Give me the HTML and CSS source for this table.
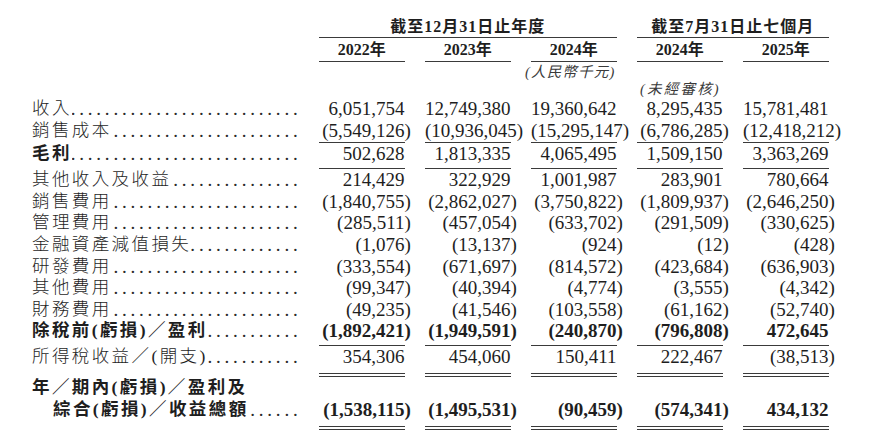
FILE: index.html
```html
<!DOCTYPE html>
<html lang="zh-Hant">
<head>
<meta charset="utf-8">
<title>損益表</title>
<link rel="stylesheet" href="styles.css">
</head>
<body>
<div class="sheet">
  <div class="row head1">
    <div class="grp g1">截至12月31日止年度</div>
    <div class="grp g2">截至7月31日止七個月</div>
  </div>
  <div class="row head2">
    <div class="yr c2">2022年</div>
    <div class="yr">2023年</div>
    <div class="yr">2024年</div>
    <div class="yr">2024年</div>
    <div class="yr">2025年</div>
  </div>
  <div class="row head3">
    <div class="note n1">(人民幣千元)</div>
  </div>
  <div class="row head4">
    <div class="note n2">(未經審核)</div>
  </div>

  <div class="row data first">
    <div class="lab"><span class="t">收入</span><span class="dots">.................................................</span></div>
    <div class="num">6,051,754</div>
    <div class="num">12,749,380</div>
    <div class="num">19,360,642</div>
    <div class="num">8,295,435</div>
    <div class="num">15,781,481</div>
  </div>
  <div class="row data u1 tight">
    <div class="lab"><span class="t">銷售成本</span><span class="dots">.................................................</span></div>
    <div class="num">(5,549,126<span class="rp">)</span></div>
    <div class="num">(10,936,045<span class="rp">)</span></div>
    <div class="num">(15,295,147<span class="rp">)</span></div>
    <div class="num">(6,786,285<span class="rp">)</span></div>
    <div class="num">(12,418,212<span class="rp">)</span></div>
  </div>
  <div class="row data u1 loose">
    <div class="lab"><span class="t b">毛利</span><span class="dots">.................................................</span></div>
    <div class="num">502,628</div>
    <div class="num">1,813,335</div>
    <div class="num">4,065,495</div>
    <div class="num">1,509,150</div>
    <div class="num">3,363,269</div>
  </div>
  <div class="row data">
    <div class="lab"><span class="t">其他收入及收益</span><span class="dots">.................................................</span></div>
    <div class="num">214,429</div>
    <div class="num">322,929</div>
    <div class="num">1,001,987</div>
    <div class="num">283,901</div>
    <div class="num">780,664</div>
  </div>
  <div class="row data">
    <div class="lab"><span class="t">銷售費用</span><span class="dots">.................................................</span></div>
    <div class="num">(1,840,755<span class="rp">)</span></div>
    <div class="num">(2,862,027<span class="rp">)</span></div>
    <div class="num">(3,750,822<span class="rp">)</span></div>
    <div class="num">(1,809,937<span class="rp">)</span></div>
    <div class="num">(2,646,250<span class="rp">)</span></div>
  </div>
  <div class="row data">
    <div class="lab"><span class="t">管理費用</span><span class="dots">.................................................</span></div>
    <div class="num">(285,511<span class="rp">)</span></div>
    <div class="num">(457,054<span class="rp">)</span></div>
    <div class="num">(633,702<span class="rp">)</span></div>
    <div class="num">(291,509<span class="rp">)</span></div>
    <div class="num">(330,625<span class="rp">)</span></div>
  </div>
  <div class="row data">
    <div class="lab"><span class="t">金融資產減值損失</span><span class="dots">.................................................</span></div>
    <div class="num">(1,076<span class="rp">)</span></div>
    <div class="num">(13,137<span class="rp">)</span></div>
    <div class="num">(924<span class="rp">)</span></div>
    <div class="num">(12<span class="rp">)</span></div>
    <div class="num">(428<span class="rp">)</span></div>
  </div>
  <div class="row data">
    <div class="lab"><span class="t">研發費用</span><span class="dots">.................................................</span></div>
    <div class="num">(333,554<span class="rp">)</span></div>
    <div class="num">(671,697<span class="rp">)</span></div>
    <div class="num">(814,572<span class="rp">)</span></div>
    <div class="num">(423,684<span class="rp">)</span></div>
    <div class="num">(636,903<span class="rp">)</span></div>
  </div>
  <div class="row data">
    <div class="lab"><span class="t">其他費用</span><span class="dots">.................................................</span></div>
    <div class="num">(99,347<span class="rp">)</span></div>
    <div class="num">(40,394<span class="rp">)</span></div>
    <div class="num">(4,774<span class="rp">)</span></div>
    <div class="num">(3,555<span class="rp">)</span></div>
    <div class="num">(4,342<span class="rp">)</span></div>
  </div>
  <div class="row data">
    <div class="lab"><span class="t">財務費用</span><span class="dots">.................................................</span></div>
    <div class="num">(49,235<span class="rp">)</span></div>
    <div class="num">(41,546<span class="rp">)</span></div>
    <div class="num">(103,558<span class="rp">)</span></div>
    <div class="num">(61,162<span class="rp">)</span></div>
    <div class="num">(52,740<span class="rp">)</span></div>
  </div>
  <div class="row data u1 bold pretax">
    <div class="lab"><span class="t b">除稅前(虧損)／盈利</span><span class="dots">.................................................</span></div>
    <div class="num">(1,892,421<span class="rp">)</span></div>
    <div class="num">(1,949,591<span class="rp">)</span></div>
    <div class="num">(240,870<span class="rp">)</span></div>
    <div class="num">(796,808<span class="rp">)</span></div>
    <div class="num">472,645</div>
  </div>
  <div class="row data u2 tax">
    <div class="lab"><span class="t">所得稅收益／(開支)</span><span class="dots">.................................................</span></div>
    <div class="num">354,306</div>
    <div class="num">454,060</div>
    <div class="num">150,411</div>
    <div class="num">222,467</div>
    <div class="num">(38,513<span class="rp">)</span></div>
  </div>
  <div class="row data">
    <div class="lab"><span class="t b">年／期內(虧損)／盈利及</span></div>
  </div>
  <div class="row data u2 bold total">
    <div class="lab indent"><span class="t b">綜合(虧損)／收益總額</span><span class="dots">.................................................</span></div>
    <div class="num">(1,538,115<span class="rp">)</span></div>
    <div class="num">(1,495,531<span class="rp">)</span></div>
    <div class="num">(90,459<span class="rp">)</span></div>
    <div class="num">(574,341<span class="rp">)</span></div>
    <div class="num">434,132</div>
  </div>
</div>
</body>
</html>
```
FILE: styles.css
```css
html, body {
  margin: 0;
  padding: 0;
  background: #ffffff;
}

body {
  width: 880px;
  height: 445px;
  overflow: hidden;
  color: #1e1e1e;
  font-family: "Liberation Serif", "Noto Sans CJK TC", serif;
}

.sheet {
  padding: 16px 0 0 32px;
}

.row {
  display: grid;
  grid-template-columns: 266.5px repeat(5, 85.5px);
  column-gap: 20.5px;
}

/* header */
.head1 {
  font-size: 16px;
  font-weight: 700;
  line-height: 20px;
}
.grp {
  text-align: center;
  letter-spacing: 1px;
  padding-top: 1px;
  border-bottom: 1.3px solid #3a3a3a;
}
.g1 { grid-column: 2 / 5; }
.g2 { grid-column: 5 / 7; }

.head2 {
  font-size: 16px;
  font-weight: 700;
  line-height: 20px;
}
.yr {
  text-align: center;
  padding: 2px 0 1px;
  border-bottom: 1.3px solid #3a3a3a;
}
.c2 { grid-column: 2; }

.note {
  font-style: italic;
  font-size: 14.5px;
  letter-spacing: 2.2px;
  color: #3a3a3a;
  white-space: nowrap;
}
.head3 {
  margin-top: 1px;
  line-height: 19px;
}
.n1 {
  grid-column: 3 / 5;
  text-align: right;
  padding-right: 1px;
  letter-spacing: 1.2px;
}
.head4 {
  line-height: 15px;
}
.n2 {
  grid-column: 5 / 7;
  text-align: left;
  padding-left: 3px;
}

/* data rows */
.data {
  font-size: 19px;
  line-height: 21.6px;
  align-items: start;
}
.first { margin-top: 1px; }

.lab {
  display: flex;
  white-space: nowrap;
}
.lab.indent { padding-left: 21px; }
.t {
  font-size: 17.5px;
  letter-spacing: 2.4px;
  font-weight: 300;
}
.t.b { font-weight: 700; }
.dots {
  flex: 1;
  overflow: hidden;
  direction: rtl;
  letter-spacing: 3.8px;
  padding-left: 5px;
  margin-right: -3px;
  color: #2a2a2a;
}

.num {
  text-align: right;
  white-space: nowrap;
}
.rp { margin-right: -0.333em; }
.bold .num { font-weight: 700; }

.u1 .num { border-bottom: 1.3px solid #3a3a3a; }
.u2 .num { border-bottom: 4.5px double #3a3a3a; }
.tight .num { padding-bottom: 1px; }
.loose .num { padding-bottom: 3.5px; }
.pretax .num { padding-bottom: 3px; }
.tax .num { padding-bottom: 5.5px; }
.total .num { padding-bottom: 6px; }
```
